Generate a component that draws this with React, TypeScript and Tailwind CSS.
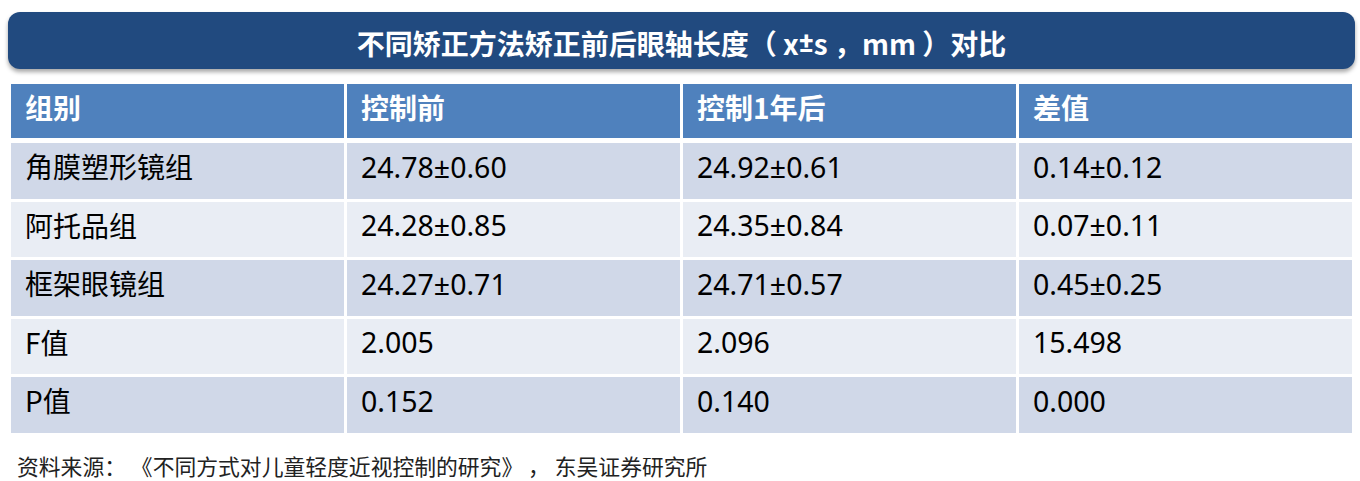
const rows = [
  ["角膜塑形镜组", "24.78±0.60", "24.92±0.61", "0.14±0.12"],
  ["阿托品组", "24.28±0.85", "24.35±0.84", "0.07±0.11"],
  ["框架眼镜组", "24.27±0.71", "24.71±0.57", "0.45±0.25"],
  ["F值", "2.005", "2.096", "15.498"],
  ["P值", "0.152", "0.140", "0.000"],
]

const headers = ["组别", "控制前", "控制1年后", "差值"]

export default function App() {
  return (
    <div
      className="h-[481px] w-[1360px] bg-white"
      style={{ fontFamily: '"Noto Sans CJK SC", "Noto Sans", sans-serif' }}
    >
      <div className="px-[8px] pt-[12px]">
        <div className="flex h-[57px] w-[1347px] items-center justify-center rounded-[12px] bg-[#214a7f] pt-[4px] text-[28px] font-bold text-white shadow-[0_3px_4px_rgba(0,0,0,0.35)]">
          不同矫正方法矫正前后眼轴长度（ x
          <span className="font-['Roboto',sans-serif]">±</span>s ，mm ）对比
        </div>
      </div>

      <div className="ml-[11px] mt-[15px] flex w-[1341px] flex-col">
        <div className="grid h-[54px] grid-cols-4 gap-x-[3px]">
          {headers.map((h) => (
            <div
              key={h}
              className="flex items-center bg-[#4f81bd] pb-[8px] pl-[14px] text-[28px] font-bold text-white"
            >
              {h}
            </div>
          ))}
        </div>
        <div className="mt-[5px] flex flex-col gap-y-[3px]">
          {rows.map((r, i) => (
            <div key={r[0]} className="grid h-[55.5px] grid-cols-4 gap-x-[3px]">
              {r.map((c, j) => (
                <div
                  key={j}
                  className={`flex items-center pl-[14px] text-black ${
                    j === 0
                      ? "pb-[9px] text-[28px]"
                      : "pb-[7px] font-['Noto_Sans','Noto_Sans_CJK_SC',sans-serif] text-[28.5px]"
                  } ${i % 2 === 0 ? "bg-[#d0d8e8]" : "bg-[#e9edf4]"}`}
                >
                  {c}
                </div>
              ))}
            </div>
          ))}
        </div>
      </div>

      <div className="ml-[17px] mt-[22px] text-[21.8px] leading-none text-[#222]">
        资料来源： 《不同方式对儿童轻度近视控制的研究》 ， 东吴证券研究所
      </div>
    </div>
  )
}
